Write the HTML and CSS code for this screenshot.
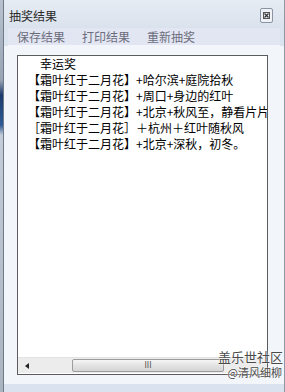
FILE: index.html
```html
<!DOCTYPE html>
<html lang="zh-CN">
<head>
    <meta charset="UTF-8">
    <meta name="viewport" content="width=device-width, initial-scale=1.0">
    <title>抽奖结果</title>
    <link rel="stylesheet" href="styles.css">
</head>
<body>
    <div class="desk"></div>
    <div class="window">
        <div class="titlebar">
            <span class="title">抽奖结果</span>
            <span class="close">
                <svg width="11" height="11" viewBox="0 0 11 11">
                    <rect x="2.5" y="2.5" width="6" height="6" fill="none" stroke="#555" stroke-width="1"/>
                    <path d="M3.5 3.5 L7.5 7.5 M7.5 3.5 L3.5 7.5" stroke="#333" stroke-width="1.2"/>
                </svg>
            </span>
        </div>

        <div class="toolbar">
            <span class="tool">保存结果</span>
            <span class="tool">打印结果</span>
            <span class="tool">重新抽奖</span>
        </div>

        <div class="panel">
            <div class="result">
                <div class="lines">
                    <div class="line prize">幸运奖</div>
                    <div class="line">【霜叶红于二月花】+哈尔滨+庭院拾秋</div>
                    <div class="line">【霜叶红于二月花】+周口+身边的红叶</div>
                    <div class="line">【霜叶红于二月花】+北京+秋风至，静看片片红叶</div>
                    <div class="line">［霜叶红于二月花］＋杭州＋红叶随秋风</div>
                    <div class="line">【霜叶红于二月花】+北京+深秋，初冬。</div>
                </div>
                <div class="hscroll">
                    <span class="arrow"></span>
                    <span class="thumb"><span class="grip">III</span></span>
                </div>
            </div>
        </div>
        <div class="frame-bottom"></div>

        <div class="watermark">
            <div class="wm-big">盖乐世社区</div>
            <div class="wm-small">@清风细柳</div>
        </div>
    </div>
</body>
</html>
```

FILE: styles.css
```css
body {
    margin: 0;
    width: 285px;
    height: 392px;
    display: flex;
    overflow: hidden;
    font-family: "Noto Sans CJK SC", "Noto Sans", sans-serif;
    font-size: 12px;
    background: #dfe6ef;
}
.desk {
    width: 3px;
    flex: none;
    background: linear-gradient(#b8c2cf 0, #9aa5b4 80px, #1c3a6c 95px, #2d5a96 125px, #c3ccd8 135px, #aab4c1 100%);
}
.window {
    position: relative;
    flex: 1;
    min-width: 0;
    display: flex;
    flex-direction: column;
    border-left: 1px solid #6f7a89;
    border-right: 1px solid #8e99a8;
    background: #dbe3ee;
}
.titlebar {
    height: 28px;
    display: flex;
    align-items: center;
    justify-content: space-between;
    padding: 0 11px 0 5px;
    background: linear-gradient(#e6ecf3, #dae2ed);
}
.title {
    color: #2a2a2a;
    font-size: 12px;
    margin-top: 2px;
}
.close {
    width: 11px;
    height: 13px;
    border: 1px solid #8a94a2;
    border-radius: 2px;
    background: #eef2f7;
    display: flex;
    align-items: center;
    justify-content: center;
    margin-top: 2px;
}
.toolbar {
    height: 17px;
    margin: 0 4px;
    padding-left: 9px;
    display: flex;
    align-items: center;
    gap: 17px;
    background: #e2e6f3;
    border-bottom: 1px solid #f4f6fb;
}
.tool {
    color: #6d6d7c;
    font-size: 12px;
}
.panel {
    flex: 1;
    min-height: 0;
    display: flex;
    padding: 9px 16px 9px 13px;
    background: #f2f5fa;
}
.result {
    flex: 1;
    min-width: 0;
    display: flex;
    flex-direction: column;
    border: 1px solid #5c5c5c;
    background: #fff;
    overflow: hidden;
}
.lines {
    flex: 1;
    padding-left: 10px;
    overflow: hidden;
    white-space: nowrap;
    color: #000;
}
.line {
    height: 16px;
    line-height: 16px;
}
.prize {
    padding-left: 12px;
}
.hscroll {
    height: 15px;
    margin-bottom: 1px;
    display: flex;
    align-items: center;
    background: #ececec;
    border-top: 1px solid #e2e2e2;
}
.arrow {
    width: 0;
    height: 0;
    margin-left: 7px;
    border-top: 3px solid transparent;
    border-bottom: 3px solid transparent;
    border-right: 4px solid #222;
}
.thumb {
    width: 152px;
    height: 13px;
    margin-left: 43px;
    box-sizing: border-box;
    border: 1px solid #9c9c9c;
    border-radius: 2px;
    background: linear-gradient(#f6f6f6, #e3e3e3 50%, #d5d5d5);
    display: flex;
    align-items: center;
    justify-content: center;
}
.grip {
    font-family: "DejaVu Sans", sans-serif;
    font-size: 8px;
    color: #555;
}
.frame-bottom {
    height: 8px;
    background: #d9e2ee;
}
.watermark {
    position: absolute;
    right: 1px;
    top: 349px;
    text-align: right;
    color: #4a4a4a;
    text-shadow: 0 0 2px #fff, 0 0 1px #fff;
}
.wm-big {
    font-size: 13px;
    line-height: 16px;
}
.wm-small {
    font-size: 11px;
    line-height: 14px;
    margin-right: 1px;
}
```
